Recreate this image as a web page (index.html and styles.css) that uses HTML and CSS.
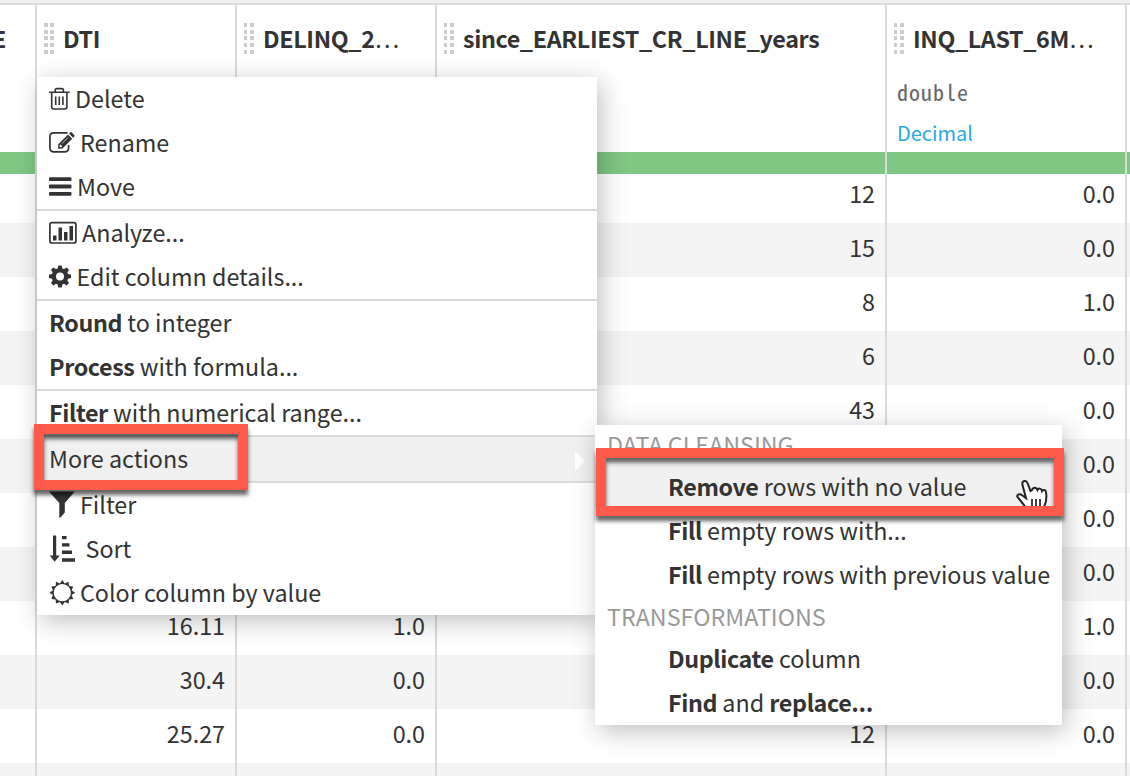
FILE: index.html
```
<!DOCTYPE html>
<html lang="en">
<head>
<meta charset="utf-8">
<title>Dataset columns</title>
<link rel="stylesheet" href="styles.css">
</head>
<body>
<main class="screen">
  <div class="topbar"></div>
  <div class="table">
    <section class="col col-edge">
      <header class="head"><span class="name name-cut">E</span></header>
      <div class="quality"></div>
      <div class="cells"><div></div><div></div><div></div><div></div><div></div><div></div><div></div><div></div><div></div><div></div><div></div><div></div></div>
    </section>
    <section class="col col-narrow">
      <header class="head"><div class="title"><i class="grip"></i><span class="name">DTI</span></div></header>
      <div class="quality"></div>
      <div class="cells"><div></div><div></div><div></div><div></div><div></div><div></div><div></div><div></div><div>16.11</div><div>30.4</div><div>25.27</div><div></div></div>
    </section>
    <section class="col col-narrow">
      <header class="head"><div class="title"><i class="grip"></i><span class="name">DELINQ_2<span class="dots">…</span></span></div></header>
      <div class="quality"></div>
      <div class="cells"><div></div><div></div><div></div><div></div><div></div><div></div><div></div><div></div><div>1.0</div><div>0.0</div><div>0.0</div><div></div></div>
    </section>
    <section class="col col-wide">
      <header class="head"><div class="title"><i class="grip"></i><span class="name">since_EARLIEST_CR_LINE_years</span></div></header>
      <div class="quality"></div>
      <div class="cells"><div>12</div><div>15</div><div>8</div><div>6</div><div>43</div><div></div><div></div><div></div><div></div><div></div><div>12</div><div></div></div>
    </section>
    <section class="col col-mid">
      <header class="head"><div class="title"><i class="grip"></i><span class="name">INQ_LAST_6M<span class="dots">…</span></span></div>
        <div class="storage">double</div><div class="meaning">Decimal</div></header>
      <div class="quality"></div>
      <div class="cells"><div>0.0</div><div>0.0</div><div>1.0</div><div>0.0</div><div>0.0</div><div>0.0</div><div>0.0</div><div>0.0</div><div>1.0</div><div>0.0</div><div>0.0</div><div></div></div>
    </section>
    <section class="col col-last">
      <header class="head"></header>
      <div class="quality"></div>
      <div class="cells"><div></div><div></div><div></div><div></div><div></div><div></div><div></div><div></div><div></div><div></div><div></div><div></div></div>
    </section>
  </div>

  <nav class="menu">
    <div class="group">
      <a class="item"><svg class="icon" width="21" height="24" viewBox="0 0 21 24"><g fill="none" stroke="#333" stroke-width="1.6"><path d="M0 5.2H20.6M6.2 5V3.2Q6.2 1.6 7.8 1.6H12.8Q14.4 1.6 14.4 3.2V5M2.7 5.5V19.8Q2.7 22 4.7 22H15.9Q17.9 22 17.9 19.8V5.5M6.7 9.500V18M10.3 9.500V18M13.9 9.500V18"/></g></svg><span class="gap-5">Delete</span></a>
      <a class="item"><svg class="icon icon-up" width="26" height="24" viewBox="0 0 26 24"><path d="M18.5 2.9H5Q.9 2.9 .9 7V17.7Q.9 21.8 5 21.8H15.5Q19.6 21.8 19.6 17.7V15" fill="none" stroke="#333" stroke-width="1.7"/><path fill="#333" fill-rule="evenodd" d="M19 4.6L23.2 8.8L13.5 18.5L9 18.8L9.3 14.3ZM10.8 14.9L10.5 17.3L12.8 17L13.3 15.9L12.3 15.8L11.9 14.5ZM20 3.6L21.2 2.4Q22 1.8 22.8 2.5L25.2 5Q25.9 5.8 25.3 6.5L24.1 7.8Z"/><path d="M13 13.6L19 7.6" stroke="#fff" stroke-width=".7"/></svg><span class="gap-5">Rename</span></a>
      <a class="item"><svg class="icon" width="23" height="24" viewBox="0 .7 23 24"><path fill="#333" d="M1 3H21.500Q22.500 3 22.500 4V5.800Q22.500 6.800 21.500 6.800H1Q0 6.800 0 5.800V4Q0 3 1 3ZM1 10.300H21.500Q22.500 10.300 22.500 11.300V13.100Q22.500 14.100 21.500 14.100H1Q0 14.100 0 13.100V11.300Q0 10.300 1 10.300ZM1 17.600H21.500Q22.500 17.600 22.500 18.600V20.400Q22.500 21.400 21.500 21.400H1Q0 21.400 0 20.400V18.600Q0 17.600 1 17.600Z"/></svg><span class="gap-5">Move</span></a>
    </div>
    <div class="group">
      <a class="item"><svg class="icon" width="28" height="24" viewBox="0 0 28 24"><rect x=".9" y="1.600" width="26" height="20.400" rx="2" fill="none" stroke="#333" stroke-width="1.7"/><path fill="#333" d="M4 14.500H7.500V19.500H4ZM9.500 6.500H13V19.500H9.500ZM15 11H18.500V19.500H15ZM20.500 5H24V19.500H20.500Z"/></svg><span class="gap-5">Analyze...</span></a>
      <a class="item"><svg class="icon" width="22" height="24" viewBox="0 .6 22 24"><path fill="#333" fill-rule="evenodd" d="M9.300 1H12.700L13.400 4L15 4.700L17.700 3L20 5.300L18.400 8L19 9.500L22 10.300V13.700L19 14.400L18.400 16L20 18.700L17.700 21L15 19.400L13.400 20L12.700 23H9.300L8.600 20L7 19.400L4.300 21L2 18.700L3.600 16L3 14.400L0 13.700V10.300L3 9.500L3.600 8L2 5.300L4.300 3L7 4.700L8.600 4ZM11 8A4 4 0 1 0 11 16A4 4 0 1 0 11 8Z"/></svg><span class="gap-6">Edit column details...</span></a>
    </div>
    <div class="group">
      <a class="item"><span><b>Round</b> to integer</span></a>
      <a class="item"><span><b>Process</b> with formula...</span></a>
    </div>
    <div class="group">
      <a class="item"><span><b>Filter</b> with numerical range...</span></a>
    </div>
    <div class="group">
      <a class="item item-active"><span>More actions</span><svg class="arrow" width="10" height="20" viewBox="0 0 10 20"><path fill="#fff" d="M0 0L10 10L0 20Z"/></svg></a>
    </div>
    <div class="group">
      <a class="item"><svg class="icon" width="26" height="28" viewBox="0 0 26 28"><path fill="#333" d="M0 .5H25.800L15.800 12V21.500L11.500 26.500H10.300V12Z"/></svg><span class="gap-5">Filter</span></a>
      <a class="item"><svg class="icon" width="26" height="28" viewBox="0 0 26 28"><path fill="#333" d="M4 .5H7.200V20.500H10.700L5.600 26.800L.8 20.500H4ZM13 1H17.600V4.200H13ZM13 8.200H20.500V11.600H13ZM13 15.600H23V19H13ZM13 23.200H26V26.700H13Z"/></svg><span class="gap-10">Sort</span></a>
      <a class="item"><svg class="icon" width="26" height="26" viewBox="-.3 .3 26 26"><path fill="#333" fill-rule="evenodd" d="M13 .2L15.400 3.700L19.300 2.100L19.700 6.300L23.900 6.700L22.300 10.600L25.800 13L22.300 15.400L23.900 19.300L19.700 19.700L19.300 23.900L15.400 22.300L13 25.800L10.600 22.300L6.700 23.900L6.300 19.700L2.100 19.300L3.700 15.400L.2 13L3.700 10.600L2.100 6.700L6.300 6.300L6.700 2.100L10.600 3.700ZM13 4.400A8.600 8.600 0 1 0 13 21.600A8.600 8.600 0 1 0 13 4.400Z"/></svg><span class="gap-5">Color column by value</span></a>
    </div>
  </nav>

  <nav class="menu submenu">
    <div class="section">DATA CLEANSING</div>
    <a class="item item-active"><span><b>Remove</b> rows with no value</span></a>
    <a class="item"><span><b>Fill</b> empty rows with...</span></a>
    <a class="item"><span><b>Fill</b> empty rows with previous value</span></a>
    <div class="section">TRANSFORMATIONS</div>
    <a class="item"><span><b>Duplicate</b> column</span></a>
    <a class="item"><span><b>Find</b> and <b>replace...</b></span></a>
  </nav>

  <svg class="cursor" width="34" height="36" viewBox="0 0 34 36"><path d="M9.500 3C7.500 3.500 7 5 7.500 7L11 20L6 16.500C4 15.500 1.500 17 2.500 19L9 27L13 33V35H28L29 29C31 25 32 20 31 14C30.500 11.500 28 11.500 27 13C26.500 10 23.500 10 22.500 12C21.500 9 18 9 17 12L15.500 13L12.500 5Q11.500 2.500 9.500 3Z" fill="#fff" stroke="#222" stroke-width="2"/><path d="M17 21V30M21 21V30M25 21V30" stroke="#222" stroke-width="1.700"/></svg>
  <div class="callout callout-more"></div>
  <div class="callout callout-remove"></div>
</main>
</body>
</html>
```
FILE: styles.css
```
* { box-sizing: border-box; }
body { margin: 0; }
.screen {
  position: relative;
  width: 1130px;
  height: 776px;
  overflow: hidden;
  background: #fff;
  color: #333;
  font: 23.3px/42px "Noto Sans CJK SC", sans-serif;
}
.topbar { height: 5px; background: #f0f0f0; border-bottom: 2px solid #dadada; }
.table { display: flex; }
.col { flex: none; border-right: 2px solid #dadada; height: 771px; overflow: hidden; }
.col-edge { width: 37px; }
.col-narrow { width: 200px; }
.col-wide { width: 450px; }
.col-mid { width: 240px; }
.col-last { width: 3px; border-right: 0; }
.head { height: 147px; padding-top: 14px; }
.title { display: flex; align-items: flex-start; gap: 9px; padding-left: 7px; height: 40px; }
.grip {
  width: 10px;
  height: 31px;
  margin-top: 4px;
  background:
    repeating-linear-gradient(#fff0 0 4px, #fff 4px 6.7px),
    linear-gradient(90deg, #ccc 3.500px, #fff 3.500px 6.500px, #ccc 6.500px);
}
.name { font-weight: 700; white-space: nowrap; line-height: 38px; letter-spacing: -.36px; }
.name-cut { display: block; margin-left: -8px; }
.dots { font-weight: 400; }
.storage { padding-left: 10px; margin-top: 12px; height: 42px; line-height: 40px; color: #666; font-family: "Noto Sans Mono CJK SC", "Liberation Mono", monospace; font-size: 22px; letter-spacing: 1px; }
.meaning { padding-left: 10px; height: 40px; line-height: 40px; color: #28a9dd; font-size: 20px; }
.quality { position: relative; height: 22px; margin-bottom: -5px; background: #81c784; }
.cells div { height: 54px; line-height: 49px; padding-right: 10px; text-align: right; }
.cells div:nth-child(even) { background: #f4f4f4; }
.menu {
  position: absolute;
  left: 37px;
  top: 77px;
  width: 560px;
  background: #fff;
  box-shadow: 4px 6px 24px rgba(0, 0, 0, .25);
}
.group + .group { border-top: 2px solid #dadada; }
.item { display: flex; align-items: center; height: 44px; padding-left: 12px; white-space: nowrap; }
.item > span { height: 44px; }
.item-active { background: #f0f0f0; }
.item b { font-weight: 700; letter-spacing: -.38px; }
.icon { flex: none; overflow: visible; }
.icon-up { margin-top: -3px; }
.gap-5 { margin-left: 5px; }
.gap-6 { margin-left: 5.5px; }
.gap-10 { margin-left: 10.5px; }
.arrow { margin: 4px 12px 0 auto; }
.submenu { left: 595px; top: 425px; width: 467px; }
.submenu .item { padding-left: 73px; }
.section { height: 40px; line-height: 38px; padding-left: 12px; color: #999; }
.cursor { position: absolute; left: 1015px; top: 478px; }
.callout { position: absolute; border: 10px solid #ff5a4c; filter: drop-shadow(0 5px 2px rgba(0, 0, 0, .6)); }
.callout-more { left: 34px; top: 424px; width: 214px; height: 66px; }
.callout-remove { left: 596px; top: 448px; width: 468px; height: 68px; }
```
